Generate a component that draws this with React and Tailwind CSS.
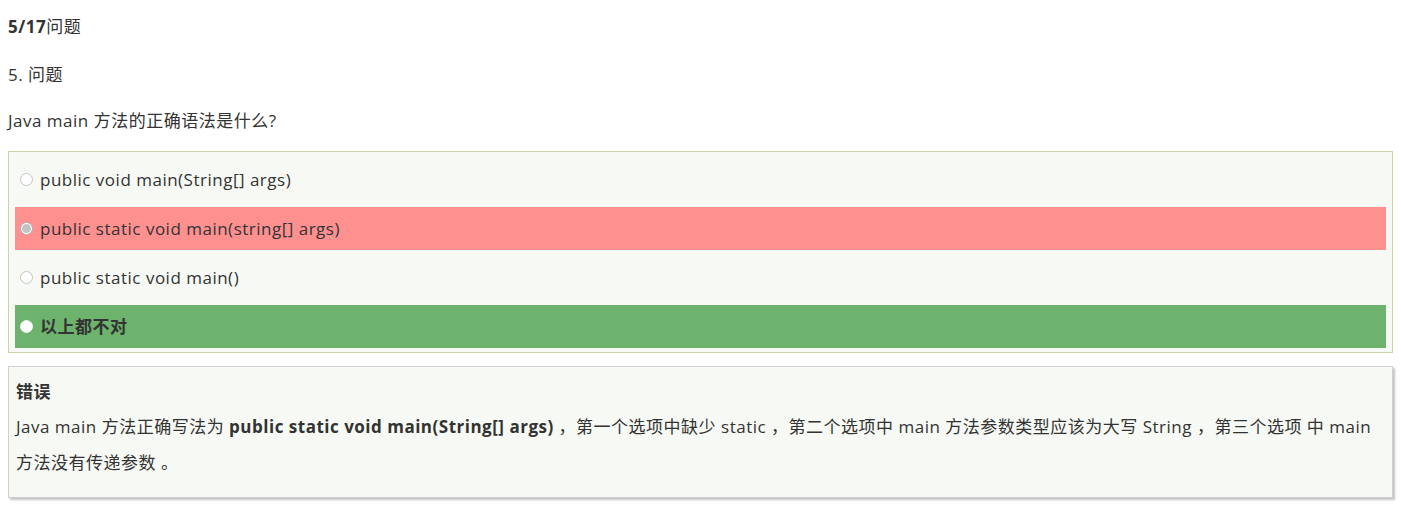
import React from 'react'

const font = { fontFamily: '"Open Sans", "Noto Sans CJK SC", sans-serif' }

function Radio({ state }) {
  if (state === 'wrong') {
    return (
      <span className="ml-[5px] mr-[7px] flex h-[13px] w-[13px] shrink-0 items-center justify-center rounded-full border border-[#b0b0b0] bg-white">
        <span className="h-[9px] w-[9px] rounded-full bg-[#c4c4c4]" />
      </span>
    )
  }
  if (state === 'right') {
    return <span className="ml-[5px] mr-[7px] h-[13px] w-[13px] shrink-0 rounded-full border border-[#eef4ee] bg-white" />
  }
  return <span className="ml-[5px] mr-[7px] h-[13px] w-[13px] shrink-0 rounded-full border border-[#c4c4c4] bg-white" />
}

function Option({ text, state }) {
  const bg = state === 'wrong' ? 'bg-[#ff9090]' : state === 'right' ? 'bg-[#6db36d]' : ''
  return (
    <label className={`flex h-[43px] items-center ${bg}`}>
      <Radio state={state} />
      <span className={`text-[17px] tracking-[0.5px] text-[#333] ${state === 'right' ? 'font-bold' : ''}`}>{text}</span>
    </label>
  )
}

export default function App() {
  const options = [
    { text: 'public void main(String[] args)' },
    { text: 'public static void main(string[] args)', state: 'wrong' },
    { text: 'public static void main()' },
    { text: '以上都不对', state: 'right' },
  ]

  return (
    <div className="min-h-[506px] bg-white px-[8px] text-[17px] tracking-[0.5px] text-[#333]" style={font}>
      {/* Header */}
      <div className="pt-[15px] leading-[24px]">
        <p><b>5/17</b>问题</p>
        <p className="mt-[24px]">5. 问题</p>
        <p className="mt-[22px]">Java main 方法的正确语法是什么?</p>
      </div>

      {/* Options */}
      <div className="mt-[18px] flex flex-col gap-[6px] border border-[#c8d6a2] bg-[#f7f9f4] px-[6px] pb-[4px] pt-[6px]">
        {options.map((o, i) => (
          <Option key={i} text={o.text} state={o.state} />
        ))}
      </div>

      {/* Explanation */}
      <div className="mt-[13px] border border-[#cfcfcf] bg-[#f7f9f4] px-[7px] pb-[16px] pt-[13px] shadow-[2px_2px_2px_#c4c4c4]">
        <p className="font-bold leading-[24px]">错误</p>
        <p className="mt-[5px] leading-[36px]">
          <span className="whitespace-nowrap">
            Java main 方法正确写法为 <b>public static void main(String[] args)</b> ，第一个选项中缺少 static ，第二个选项中 main 方法参数类型应该为大写 String ，第三个选项 中 main
          </span>
          <br />
          方法没有传递参数 。
        </p>
      </div>
    </div>
  )
}
